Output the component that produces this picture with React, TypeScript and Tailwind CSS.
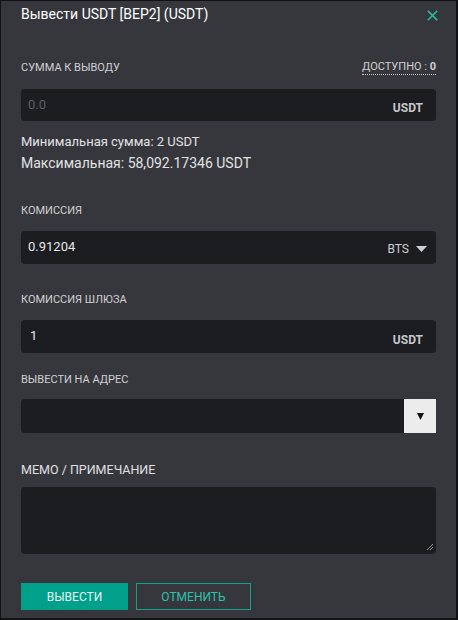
import React from "react";

const Label = ({ children, className = "" }: { children: React.ReactNode; className?: string }) => (
  <div className={`text-[11px] leading-[14px] uppercase text-[#d0d0d2] ${className}`}>{children}</div>
);

const App = () => {
  return (
    <div
      className="w-[458px] h-[620px] bg-[#36373c] border-t border-l border-r-2 border-b-2 border-[#111214] flex flex-col px-5 text-white"
      style={{ fontFamily: "Roboto, 'Noto Sans', sans-serif" }}
    >
      {/* header */}
      <div className="flex items-center justify-between pt-[3px]">
        <h2 className="text-[14px] leading-5 text-white">Вывести USDT [BEP2] (USDT)</h2>
        <svg width="11" height="11" viewBox="0 0 12 12" className="-mr-[2px] mt-[3px]">
          <path d="M1.5 1.5 L10.5 10.5 M10.5 1.5 L1.5 10.5" stroke="#2ab59f" strokeWidth="1.8" strokeLinecap="square" />
        </svg>
      </div>

      {/* amount */}
      <div className="flex items-center justify-between mt-[36px]">
        <Label>Сумма к выводу</Label>
        <span className="text-[11px] leading-[14px] text-[#d0d0d2] border-b border-dotted border-[#c8c8c8]">
          ДОСТУПНО : <b>0</b>
        </span>
      </div>
      <div className="mt-[14px] h-8 rounded bg-[#1c1d21] flex items-center justify-between pl-[7px] pr-[13px]">
        <span className="text-[13px] text-[#5e5f63]">0.0</span>
        <span className="text-[12px] font-bold text-[#c8c8ca] pt-[6px]">USDT</span>
      </div>

      <div className="mt-[11px] text-[13px] leading-5 text-[#e2e2e4]">Минимальная сумма: 2 USDT</div>
      <div className="mt-[1px] text-[14px] leading-5 text-[#e2e2e4]">Максимальная: 58,092.17346 USDT</div>

      {/* fee */}
      <Label className="mt-[31px]">Комиссия</Label>
      <div className="mt-[13px] h-[33px] rounded bg-[#1c1d21] flex items-center justify-between pl-[7px] pr-[9px]">
        <span className="text-[13px] text-[#e6e6e8] -mt-[2px]">0.91204</span>
        <span className="flex items-center gap-[7px] text-[12px] text-[#cfcfd1] pt-[3px]">
          BTS
          <svg width="11" height="6" viewBox="0 0 11 6">
            <path d="M0 0 H11 L5.5 6 Z" fill="#cfcfd1" />
          </svg>
        </span>
      </div>

      {/* gateway fee */}
      <Label className="mt-[29px]">Комиссия шлюза</Label>
      <div className="mt-[13px] h-[33px] rounded bg-[#1c1d21] flex items-center justify-between pl-[9px] pr-[13px]">
        <span className="text-[13px] text-[#e6e6e8] -mt-[2px]">1</span>
        <span className="text-[12px] font-bold text-[#c8c8ca] pt-[6px]">USDT</span>
      </div>

      {/* address */}
      <Label className="mt-[20px]">Вывести на адрес</Label>
      <div className="mt-[12px] h-[34px] flex">
        <div className="flex-1 rounded-l bg-[#1c1d21]" />
        <div className="w-8 bg-[#ececec] flex items-center justify-center">
          <svg width="7" height="7" viewBox="0 0 7 7">
            <path d="M0 0 H7 L3.5 7 Z" fill="#111" />
          </svg>
        </div>
      </div>

      {/* memo */}
      <div className="mt-[30px] text-[12.5px] leading-[14px] uppercase text-[#e0e0e2]">Мемо / Примечание</div>
      <div className="mt-[10px] h-[67px] rounded bg-[#1c1d21] relative">
        <svg width="8" height="8" viewBox="0 0 8 8" className="absolute right-[2px] bottom-[3px]">
          <path d="M7 1 L1 7 M7 4 L4 7" stroke="#9a9a9c" strokeWidth="1" />
        </svg>
      </div>

      {/* buttons */}
      <div className="mt-[29px] flex gap-2">
        <button className="w-[107px] h-[27px] bg-[#00a08b] text-[12px] text-[#e8f6f3] uppercase">Вывести</button>
        <button className="w-[115px] h-[27px] border border-[#14a08e] text-[12px] text-[#2cc2ad] uppercase">Отменить</button>
      </div>
    </div>
  );
};

export default App;
